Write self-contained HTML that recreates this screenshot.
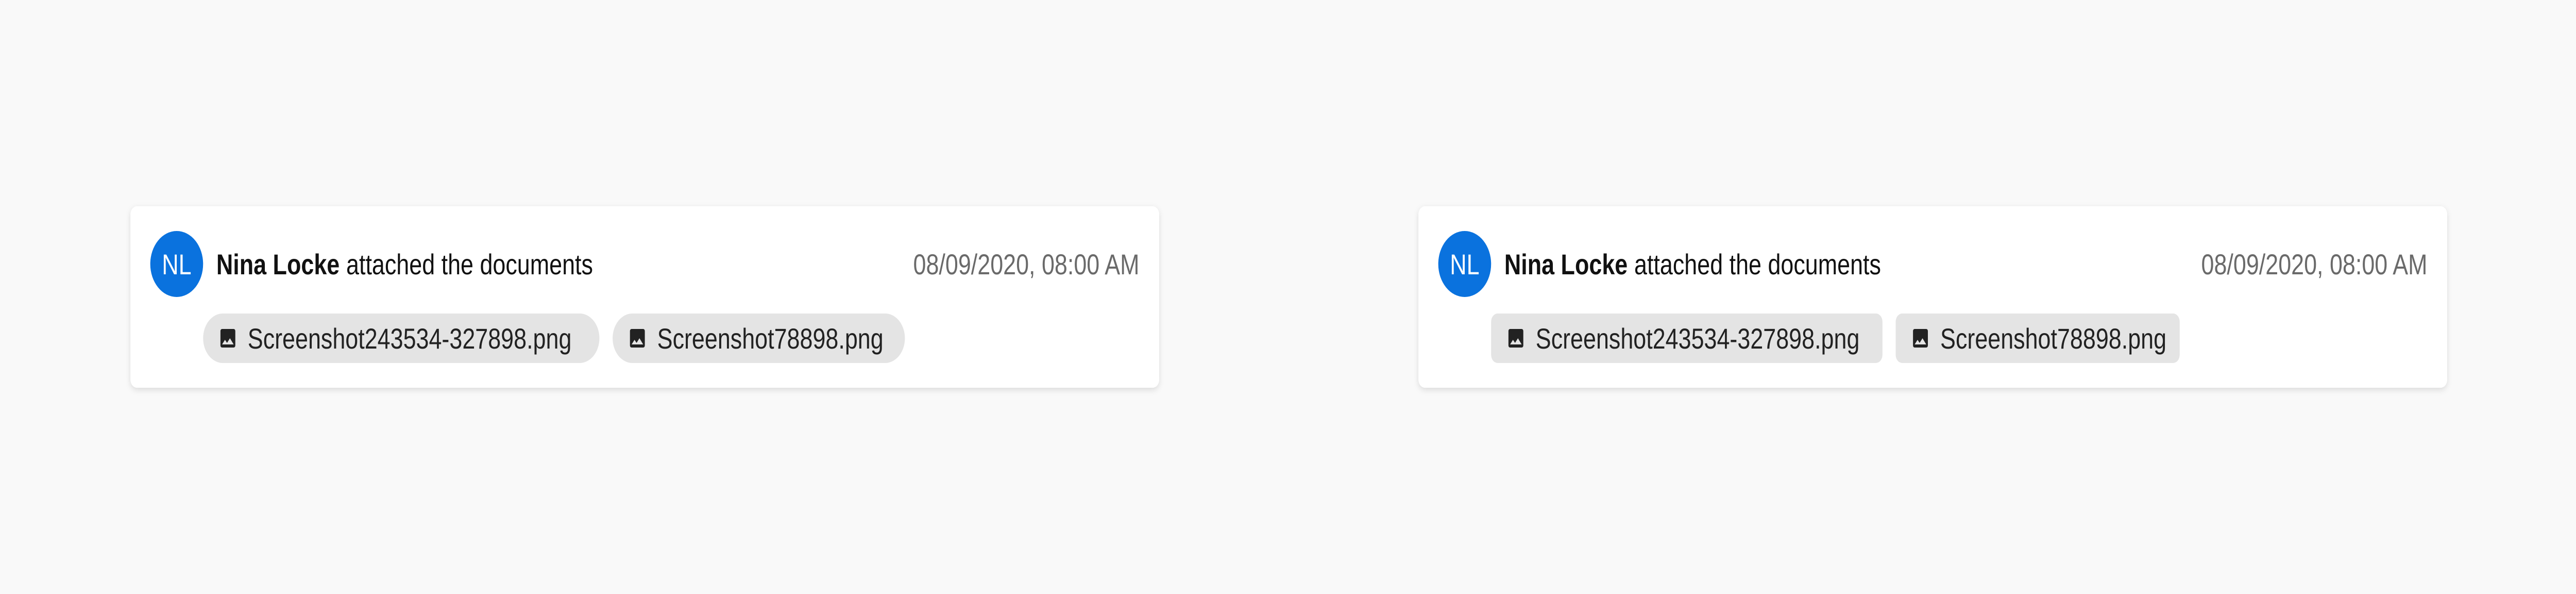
<!DOCTYPE html>
<html><head><meta charset="utf-8"><style>
html,body{margin:0;padding:0;background:#f9f9f9;overflow:hidden;}
svg{display:block;width:100vw;height:100vh;}
text{font-family:"Liberation Sans",sans-serif;font-size:14px;}
</style></head><body>
<svg viewBox="0 0 1560 288" preserveAspectRatio="none" xmlns="http://www.w3.org/2000/svg">
<defs>
<filter id="sh" x="-5%" y="-20%" width="110%" height="140%"><feDropShadow dx="0" dy="1" stdDeviation="1.5" flood-color="#000" flood-opacity="0.12"/></filter>
<path id="ic" fill="#222" d="M21 19V5c0-1.1-.9-2-2-2H5c-1.1 0-2 .9-2 2v14c0 1.1.9 2 2 2h14c1.1 0 2-.9 2-2zM8.5 13.5l2.5 3 3.5-4.5 4.5 6H5l3.5-4.5z"/>
</defs>
<rect width="1560" height="288" fill="#f9f9f9"/>

<g transform="translate(79,100)">
<rect width="623" height="88" rx="4" fill="#fff" filter="url(#sh)"/>
<circle cx="28" cy="28" r="16" fill="#0a72de"/>
<text x="28" y="33" fill="#fff" text-anchor="middle">NL</text>
<text x="52" y="33" fill="#111"><tspan font-weight="bold">Nina Locke</tspan><tspan dx="4">attached the documents</tspan></text>
<text x="611" y="33" fill="#6a6a6a" text-anchor="end">08/09/2020, 08:00 AM</text>
<rect x="44" y="52" width="240" height="24" rx="12" fill="#e4e4e4"/>
<use href="#ic" transform="translate(53,58) scale(0.5)"/>
<text x="71" y="69" fill="#222">Screenshot243534-327898.png</text>
<rect x="292" y="52" width="177" height="24" rx="12" fill="#e4e4e4"/>
<use href="#ic" transform="translate(301,58) scale(0.5)"/>
<text x="319" y="69" fill="#222">Screenshot78898.png</text>
</g>

<g transform="translate(859,100)">
<rect width="623" height="88" rx="4" fill="#fff" filter="url(#sh)"/>
<circle cx="28" cy="28" r="16" fill="#0a72de"/>
<text x="28" y="33" fill="#fff" text-anchor="middle">NL</text>
<text x="52" y="33" fill="#111"><tspan font-weight="bold">Nina Locke</tspan><tspan dx="4">attached the documents</tspan></text>
<text x="611" y="33" fill="#6a6a6a" text-anchor="end">08/09/2020, 08:00 AM</text>
<rect x="44" y="52" width="237" height="24" rx="4" fill="#e4e4e4"/>
<use href="#ic" transform="translate(53,58) scale(0.5)"/>
<text x="71" y="69" fill="#222">Screenshot243534-327898.png</text>
<rect x="289" y="52" width="172" height="24" rx="4" fill="#e4e4e4"/>
<use href="#ic" transform="translate(298,58) scale(0.5)"/>
<text x="316" y="69" fill="#222">Screenshot78898.png</text>
</g>
</svg>
</body></html>
